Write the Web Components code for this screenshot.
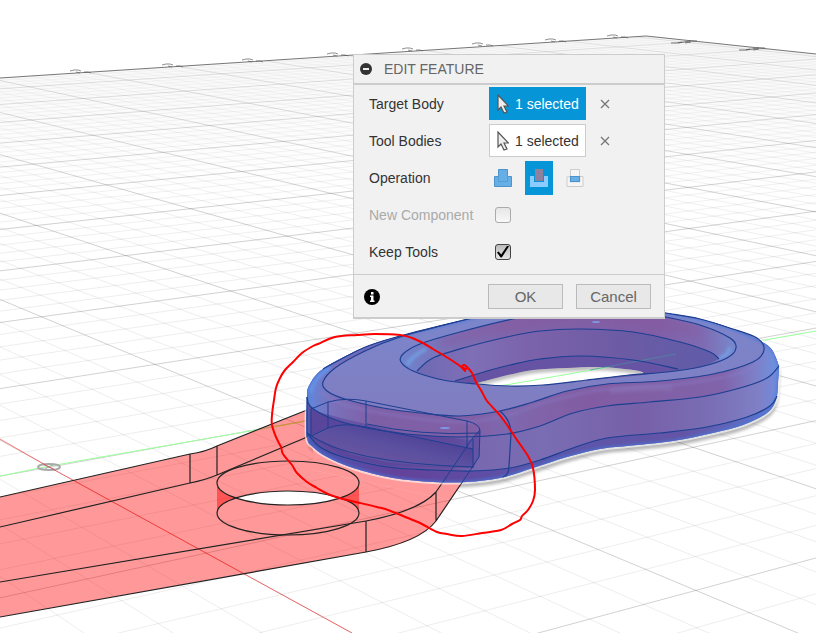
<!DOCTYPE html>
<html lang="en">
<head>
<meta charset="utf-8">
<title>Edit Feature</title>
<style>
  html, body { margin: 0; height: 100%; background: #fff; }
  body { font-family: "Liberation Sans", Arial, sans-serif; overflow: hidden; }
</style>
</head>
<body>
<cad-workspace>
  <model-canvas></model-canvas>
  <edit-feature-dialog slot="dialog"></edit-feature-dialog>
</cad-workspace>

<script>
/* Workspace: the canvas fills the window, the dialog floats over it. */
customElements.define('cad-workspace', class extends HTMLElement {
  constructor() {
    super();
    this.attachShadow({ mode: 'open' }).innerHTML = `
      <style>
        :host { display: block; position: relative; height: 100vh; overflow: hidden; }
        ::slotted([slot=dialog]) { position: absolute; left: 353px; top: 54px; }
      </style>
      <slot></slot><slot name="dialog"></slot>`;
  }
});

/* ---------- geometry helpers ---------- */

/* Plane-to-screen perspective, fitted to known grid crossings [a, b, x, y]. */
function fitPerspective(points) {
  const m = Array.from({ length: 8 }, () => Array(9).fill(0));
  for (const [a, b, x, y] of points)
    for (const r of [[a, b, 1, 0, 0, 0, -a * x, -b * x, x], [0, 0, 0, a, b, 1, -a * y, -b * y, y]])
      for (let i = 0; i < 8; i++) for (let j = 0; j < 9; j++) m[i][j] += r[i] * r[j];
  for (let i = 0; i < 8; i++) {
    let p = i;
    for (let k = i; k < 8; k++) if (Math.abs(m[k][i]) > Math.abs(m[p][i])) p = k;
    [m[i], m[p]] = [m[p], m[i]];
    for (let k = 0; k < 8; k++) if (k !== i) {
      const f = m[k][i] / m[i][i];
      for (let j = i; j < 9; j++) m[k][j] -= f * m[i][j];
    }
  }
  const h = m.map((r, i) => r[8] / r[i]);
  return (a, b) => {
    const w = h[6] * a + h[7] * b + 1;
    return w < 0.02 ? null : [(h[0] * a + h[1] * b + h[2]) / w, (h[3] * a + h[4] * b + h[5]) / w];
  };
}

/* Smooth curve through the points (Catmull-Rom to Bezier). */
function curve(pts, first = 'M') {
  const f = n => n.toFixed(1);
  let d = `${first}${pts[0]}`;
  for (let i = 0; i < pts.length - 1; i++) {
    const p0 = pts[i - 1] || pts[i], p1 = pts[i], p2 = pts[i + 1], p3 = pts[i + 2] || p2;
    d += `C${f(p1[0] + (p2[0] - p0[0]) / 6)} ${f(p1[1] + (p2[1] - p0[1]) / 6)} ${f(p2[0] - (p3[0] - p1[0]) / 6)} ${f(p2[1] - (p3[1] - p1[1]) / 6)} ${p2[0]} ${p2[1]}`;
  }
  return d;
}
const back = a => [...a].reverse();

/* ---------- ground grid ---------- */
function gridMarkup() {
  const at = fitPerspective([
    [0,1,181.7,91.3],[0,2,251.7,103.3],[0,3,321,116.7],[1,1,81.7,98.7],[1,2,144.3,111.3],[1,3,208.3,125.7],
    [1,4,282.7,141.3],[2,3,93.3,135.7],[2,4,164,152.3],[2,5,242.3,171.7],[2,6,328.3,193],[3,4,33.3,163.7],
    [3,5,107.3,184.7],[3,6,189.5,208.5],[3,7,287.3,236],[4,6,38.3,225.3],[4,7,126,255.3],[4,8,230,290.7],
    [5,8,41.7,316.7],[5,9,156,364.3],[6,10,49.3,466.7],[5,12,695,592],[5,11,466.7,495],[4,11,696.7,449],
    [0,7,687,187.7],[-2,5,687,126.7],[-1,6,687,154.3]
  ]);
  let minor = '', major = '';
  const add = (p, q, isMajor) => {
    if (!p || !q) return;
    const s = `M${p[0].toFixed(1)} ${p[1].toFixed(1)}L${q[0].toFixed(1)} ${q[1].toFixed(1)}`;
    if (isMajor) major += s; else minor += s;
  };
  for (let i = -50; i <= 50; i++) {
    const a = i / 5;
    for (let b = -1; b < 15; b++) add(at(a, b), at(a, b + 1), i % 5 === 0);
  }
  for (let i = -3; i <= 75; i++) {
    const b = i / 5;
    for (let a = -10; a < 10; a++) add(at(a, b), at(a + 1, b), i % 5 === 0);
  }
  return `<g clip-path="url(#floor)" fill="none">
    <path d="${minor}" stroke="url(#minorInk)"/>
    <path d="${major}" stroke="url(#majorInk)"/>
  </g>
  <path d="M0 78L646 36L816 54" fill="none" stroke="#555" stroke-opacity=".8"/>`;
}

/* ---------- link body curves ---------- */
const rimTop = [[307,397],[309,386],[323,369],[363,348],[400,336],[460,321],[515,309],[570,304],[620,306],[666,313],[700,319],[733,329],[760,341],[772,350],[779,366]];
const rimLow = [[779,366],[778,383],[776,400],[767,413],[743,425],[713,433],[673,441],[627,446],[600,449],[567,457],[533,468],[500,478],[467,482],[433,482],[393,478],[353,468],[327,457],[313,447],[307,437],[307,397]];
const faceOuter = [[460,321],[400,337],[365,351],[335,368],[323,382],[327,391],[345,399],[383,408],[420,413],[460,416],[500,411],[533,402],[567,391],[607,384],[660,381],[713,374],[753,362],[764,350],[757,338],[733,329]];
const sideTop = [[307,397],[311,407],[333,419],[367,428],[407,434],[460,437],[507,434],[540,426],[573,413],[607,406],[650,402],[700,397],[740,388],[767,378],[779,366]];
const sideLow = [[307,433],[320,447],[343,457],[387,467],[433,470],[473,471],[510,468],[540,460],[573,448],[607,438],[660,433],[707,427],[747,417],[770,406],[777,396]];
const ringTop = [[666,317],[620,311],[570,310],[513,319],[460,332],[420,344],[403,354],[401,362],[413,371],[443,380],[477,384],[510,386],[543,385],[587,380],[630,375],[667,372],[700,367],[727,358],[736,348],[730,338],[700,325],[666,317]];
const wallTop = [[417,371],[433,358],[467,347],[507,337],[540,331],[580,329],[633,332],[680,342],[710,352],[719,359]];
const wallLow = [[455,381],[487,371],[510,365],[540,359],[580,356],[633,360],[678,369]];
const ringFront = [[417,372],[443,380],[477,384],[510,386],[543,385],[587,380],[630,375],[667,372],[700,367],[719,359]];
const hole = [[474,384],[500,377],[533,370],[567,368],[600,367],[633,370],[643,373],[627,375],[587,380],[543,385],[510,386],[474,384]];

const pen = [[615,182],[600,168],[565,145],[520,118],[490,98],[455,83],[420,74],[345,71],[290,74],[225,82],[175,103],[160,108],[125,130],[100,155],[75,180],[60,205],[47,235],[42,270],[35,315],[37,345],[47,380],[62,410],[70,432],[95,465],[110,488],[140,517],[170,535],[205,552],[250,567],[300,578],[350,592],[385,601],[430,617],[480,640],[530,665],[560,673],[605,677],[665,670],[723,660],[755,642],[780,630],[785,618],[805,600],[820,572],[825,540],[818,475],[803,438],[765,380],[735,335],[712,305],[680,272],[665,247],[648,215],[635,190],[622,170],[612,166],[607,170],[618,178]]
  .map(([x, y]) => [Math.round(260 + x / 3), Math.round(310 + y / 3)]);

/* Tiny ruler figures lying flat along the far edges of the grid. */
const rulerLeft = [[78,71],[170,65],[250,60],[335,54],[410,49],[480,44],[553,40],[615,36]]
  .map(([x, y]) => `M${x - 8} ${y}l4 -1h4l3 1M${x - 2} ${y + 1}l4 1M${x + 6} ${y + 1}l4 0l3 1`).join('');
const rulerRight = [[684,42],[752,49]]
  .map(([x, y]) => `M${x - 13} ${y + 1}l6 0l5 -1M${x - 6} ${y + 1}l12 -2M${x + 1} ${y + 1}l6 -1M${x + 5} ${y - 1}l8 0`).join('');

customElements.define('model-canvas', class extends HTMLElement {
  constructor() {
    super();
    const body = curve(rimTop) + curve(rimLow, 'L') + 'Z';
    this.attachShadow({ mode: 'open' }).innerHTML = `
    <style>
      :host { display: block; height: 100%; }
      svg { display: block; width: 100%; height: 100%; }
    </style>
    <svg viewBox="0 0 816 633" preserveAspectRatio="xMinYMin slice" role="img" aria-label="3D model view">
      <defs>
        <clipPath id="floor"><path d="M0 78L646 36L816 54V633H0Z"/></clipPath>
        <clipPath id="solid"><path d="${body}"/></clipPath>
        <clipPath id="fillet"><path d="${curve(rimTop)}${curve(back(sideTop), 'L')}Z"/></clipPath>
        <clipPath id="opening"><path d="${curve(hole)}Z"/></clipPath>
        <clipPath id="ring"><path d="${curve(ringTop)}Z"/></clipPath>
        <filter id="b1" x="-20%" y="-20%" width="140%" height="140%"><feGaussianBlur stdDeviation="1.5"/></filter>
        <filter id="b4" x="-50%" y="-50%" width="200%" height="200%"><feGaussianBlur stdDeviation="4"/></filter>
        <linearGradient id="minorInk" x1="0" y1="40" x2="0" y2="260" gradientUnits="userSpaceOnUse">
          <stop offset="0" stop-color="#000" stop-opacity=".02"/><stop offset=".3" stop-color="#000" stop-opacity=".04"/><stop offset="1" stop-color="#000" stop-opacity=".07"/></linearGradient>
        <linearGradient id="majorInk" x1="0" y1="40" x2="0" y2="200" gradientUnits="userSpaceOnUse">
          <stop offset="0" stop-color="#000" stop-opacity=".09"/><stop offset="1" stop-color="#000" stop-opacity=".18"/></linearGradient>
        <linearGradient id="haze" x1="0" y1="36" x2="0" y2="200" gradientUnits="userSpaceOnUse">
          <stop offset="0" stop-color="#000" stop-opacity=".03"/><stop offset="1" stop-color="#000" stop-opacity="0"/></linearGradient>
        <linearGradient id="side" x1="307" x2="779" y1="0" y2="0" gradientUnits="userSpaceOnUse">
          <stop offset="0" stop-color="#5c4a9c"/><stop offset=".3" stop-color="#68509f"/><stop offset=".36" stop-color="#7868b0"/>
          <stop offset=".5" stop-color="#7a6db3"/><stop offset=".7" stop-color="#7760a8"/>
          <stop offset=".85" stop-color="#796db4"/><stop offset=".96" stop-color="#7f80c6"/><stop offset="1" stop-color="#6f8ce0"/></linearGradient>
        <linearGradient id="round" x1="307" x2="779" y1="0" y2="0" gradientUnits="userSpaceOnUse">
          <stop offset="0" stop-color="#5f88dc"/><stop offset=".05" stop-color="#7a72bb"/><stop offset=".14" stop-color="#7e5fa6"/>
          <stop offset=".35" stop-color="#805fa5"/><stop offset=".42" stop-color="#7f68ae"/><stop offset=".6" stop-color="#825ca2"/>
          <stop offset=".88" stop-color="#8063aa"/><stop offset=".95" stop-color="#7d80c8"/><stop offset="1" stop-color="#6d93e2"/></linearGradient>
        <linearGradient id="base" x1="307" x2="779" y1="0" y2="0" gradientUnits="userSpaceOnUse">
          <stop offset="0" stop-color="#4c55b0"/><stop offset=".2" stop-color="#64429a"/><stop offset=".5" stop-color="#5a56ab"/>
          <stop offset=".8" stop-color="#6454a6"/><stop offset="1" stop-color="#5b79d0"/></linearGradient>
        <linearGradient id="wall" x1="410" x2="720" y1="0" y2="0" gradientUnits="userSpaceOnUse">
          <stop offset="0" stop-color="#6c69b3"/><stop offset=".2" stop-color="#7e6fb6"/><stop offset=".4" stop-color="#7b62aa"/>
          <stop offset=".7" stop-color="#6b5ba4"/><stop offset="1" stop-color="#5f5ca9"/></linearGradient>
        <linearGradient id="ringFill" x1="401" x2="736" y1="0" y2="0" gradientUnits="userSpaceOnUse">
          <stop offset="0" stop-color="#6e84cc"/><stop offset=".12" stop-color="#7a72b8"/><stop offset=".35" stop-color="#8062a8"/>
          <stop offset=".75" stop-color="#815ea5"/><stop offset=".9" stop-color="#7e6bb2"/><stop offset="1" stop-color="#7888cd"/></linearGradient>
        <linearGradient id="top" x1="0" y1="320" x2="0" y2="415" gradientUnits="userSpaceOnUse">
          <stop offset="0" stop-color="#7c86cb"/><stop offset="1" stop-color="#807cc0"/></linearGradient>
        <linearGradient id="pocket" x1="395" x2="385" y1="428" y2="468" gradientUnits="userSpaceOnUse">
          <stop offset="0" stop-color="#4f4297"/><stop offset=".45" stop-color="#5b50a0"/><stop offset="1" stop-color="#6b559f"/></linearGradient>
      </defs>

      <rect width="816" height="633" fill="url(#haze)" clip-path="url(#floor)"/>
      ${gridMarkup()}
      <g fill="none" stroke="#555"><path d="${rulerLeft}" stroke-opacity=".65"/><path d="${rulerRight}" stroke-opacity=".8"/></g>

      <!-- origin and axes -->
      <path d="M0 476L50 466L273 427L816 331" fill="none" stroke="#9f9"/>
      <g fill="none" stroke="#aaa" stroke-width="2"><ellipse cx="49" cy="467" rx="11" ry="3"/><path d="M44 465l10 4M54 464l-9 5" stroke-width="1"/></g>

      <!-- shadow under the link -->
      <path d="${body}" fill="#000" fill-opacity=".28" transform="translate(1 5)" filter="url(#b1)"/>

      <!-- highlighted arm -->
      <path fill="#fff" d="M236 498A71 22 0 0 0 340 498A71 22 0 0 0 236 498Z"/>
      <path fill="#f99" d="M313 440L480 440L461 485L450 500L313 470Z"/>
      <path fill="#f00" fill-opacity=".4" fill-rule="evenodd"
        d="M0 497L190 454Q205 452 217 446L307 410L313 408V440L313 470L450 500L461 484L436 521Q420 543 366 552L0 617Z
           M236 498A71 22 0 0 0 340 498A71 22 0 0 0 236 498Z"/>
      <g fill="#f00" fill-opacity=".45">
        <path d="M217 483A71 22 0 0 0 236 498A71 22 0 0 0 217 513Z"/>
        <path d="M359 483A71 22 0 0 1 340 498A71 22 0 0 1 359 513Z"/>
      </g>
      <path d="M273 427L310 420" stroke="#c90" stroke-opacity=".45"/>
      <path d="M0 439L49 467L352 633" fill="none" stroke="#f00" stroke-opacity=".5"/>
      <g fill="none" stroke="#222" stroke-width="1.2">
        <path d="M0 497L190 454Q205 452 217 446L312 408M0 527L190 483Q205 480 217 475L312 435M190 454V483M217 446V475"/>
        <path d="M0 582L366 521Q419 511 436 492L447 476M0 617L366 552Q420 542 436 521L463 481M366 521V552M436 492V521"/>
        <ellipse cx="288" cy="483" rx="71" ry="22"/><ellipse cx="288" cy="513" rx="71" ry="22"/>
      </g>

      <!-- link body -->
      <path d="${body}" fill="none" stroke="#fff" stroke-opacity=".6" stroke-width="4"/>
      <path d="${body}" fill="url(#base)"/>
      <path d="${curve(rimTop)}L777 396${curve(back(sideLow), 'L')}Z" fill="url(#side)"/>
      <path d="${curve(rimTop)}${curve(back(sideTop), 'L')}Z" fill="url(#round)"/>
      <path d="M311 410L345 419L407 434L472 440L480 430V455L473 468L387 466L343 456L311 436Z" fill="#55439a" fill-opacity=".55"/>
      <path d="M311 435L328 428L343 424L366 427L400 435L473 449V468L430 466L387 462L350 454Z" fill="url(#pocket)"/>
      <path d="${curve(faceOuter)}L733 329${curve(back(rimTop.slice(5, 12)), 'L')}Z" fill="url(#top)"/>
      <g clip-path="url(#fillet)" fill="none" filter="url(#b1)">
        <path d="${curve([[320,392],[345,405],[400,416],[460,422],[505,416],[550,401],[607,389],[680,384],[740,373],[768,355]])}" stroke="#8b80cc" stroke-width="2" stroke-opacity=".5"/>
        <path d="M610 391Q645 387 672 388" stroke="#938bcd" stroke-width="6" stroke-opacity=".25"/>
        <path d="M310 393Q311 378 330 367" stroke="#6794e8" stroke-width="5"/>
      </g>
      <path d="${curve(ringTop)}Z" fill="url(#ringFill)"/>
      <g clip-path="url(#ring)">
        <path d="${curve([[440,343],[500,327],[570,316],[640,320],[700,333]])}" fill="none" stroke="#8b5799" stroke-opacity=".6" stroke-width="6" filter="url(#b4)"/>
        <path d="M407 365Q412 356 426 349M718 359Q731 354 729 347" fill="none" stroke="#72a5e8" stroke-opacity=".75" stroke-width="4" filter="url(#b1)"/>
      </g>
      <path d="${curve(wallTop)}${curve(back(ringFront), 'L')}Z" fill="url(#wall)"/>
      <path d="${curve(wallLow)}L643 375L543 385L474 384Z" fill="#6653a3"/>
      <g clip-path="url(#opening)">
        <rect x="460" y="360" width="200" height="30" fill="#fff"/>
        <path d="${curve(hole.slice(0, 7))}" fill="none" stroke="#000" stroke-opacity=".25" stroke-width="7" filter="url(#b1)"/>
        <path d="M500 386L816 331" stroke="#9f9"/>
      </g>
      <path d="M590 370L676 354" stroke="#4a8f9f" stroke-opacity=".7"/>
      <path d="${body}" fill="none" stroke="#4a78d8" stroke-opacity=".7" stroke-width="3" clip-path="url(#solid)" filter="url(#b1)"/>
      <path d="${body}" fill="none" stroke="#456fd0" stroke-opacity=".55" clip-path="url(#solid)"/>

      <g fill="none" stroke="#1d3f91" stroke-width="1.2">
        <path d="${curve(rimTop.slice(2, 12))}"/>
        <path d="${curve(faceOuter)}"/><path d="${curve(sideTop)}"/><path d="${curve(sideLow)}"/>
        <path d="${curve(ringTop)}"/><path d="${curve(wallTop)}"/><path d="${curve(wallLow)}"/>
        <path d="M307 397V437M500 411Q511 420 511 434L509 466Q509 475 503 477"/>
        <path stroke-width="1" d="M311 409L328 402Q347 397 366 401L467 421Q480 424 480 431L479 457L461 484
          M311 436L328 428Q343 422 366 427L473 449M311 409V436M328 402V428M366 401V427M467 421V448M473 439V468
          M480 430L472 439L443 482M307 433Q345 463 473 467M367 424Q420 436 480 433"/>
      </g>
      <ellipse cx="445" cy="428" rx="5" ry="1" fill="#7f97e6"/><ellipse cx="596" cy="322" rx="4" ry="1" fill="#7f97e6"/>

      <!-- freehand markup -->
      <path d="${curve(pen)}" fill="none" stroke="#f00" stroke-width="2" stroke-linecap="round" stroke-linejoin="round"/>
    </svg>`;
  }
});

/* One labelled line of the dialog. */
customElements.define('feature-row', class extends HTMLElement {
  constructor() {
    super();
    this.attachShadow({ mode: 'open' }).innerHTML = `
      <style>
        :host { display: grid; grid-template-columns: 120px 1fr; align-items: center; height: 37px; }
        .value { display: flex; align-items: center; }
      </style>
      <slot name="label"></slot><div class="value"><slot></slot></div>`;
  }
});

/* Small drawings used by the dialog's controls. */
const ICONS = {
  cursor: [12, 20, '<path d="M1 1V16L4 13L7 19L10 18L7 12H11.500Z" fill="#eee" stroke="#555" stroke-width="1.2"/>'],
  clear: [10, 10, '<path d="M1 1L9 9M9 1L1 9" fill="none" stroke="#777" stroke-width="1.3"/>'],
  join: [18, 18, '<path d="M4.500 .5H13.500V7.500H17.500V17.500H.5V7.500H4.500Z" fill="#65aee6" stroke="#4e93c9"/><path d="M4.500 7.500V12.500H13.500V7.500" fill="none" stroke="#559cd3"/>'],
  cut: [18, 18, '<path d="M0 7H4V13H14V7H18V18H0Z" fill="#8accff"/><rect x="5" y="0" width="8" height="12" fill="#8d829d"/>'],
  intersect: [18, 18, '<path d="M4.500 .5H13.500V7.500H17V17.500H1V7.500H4.500Z" fill="#f5f5f5" stroke="#ccc"/><path d="M1 8H4V13H14V8" fill="none" stroke="#ddd"/><rect x="4.500" y="7.500" width="9" height="5" fill="#65aee6" stroke="#4a93cc"/>'],
  collapse: [12, 12, '<circle cx="6" cy="6" r="6" fill="#333"/><rect x="3" y="5" width="6" height="2" fill="#eee"/>'],
  info: [16, 16, '<circle cx="8" cy="8" r="8" fill="#000"/><path d="M7 3h2.500v2.500H7zM6 6.500h3.500v5h1V13H6v-1.500h1V8H6z" fill="#fff"/>']
};
customElements.define('ui-icon', class extends HTMLElement {
  connectedCallback() {
    if (this.shadowRoot) return;
    const [w, h, art] = ICONS[this.getAttribute('name')];
    this.attachShadow({ mode: 'open' }).innerHTML = `
      <style>:host { display: block; flex: none; } svg { display: block; }</style>
      <svg width="${w}" height="${h}" viewBox="0 0 ${w} ${h}" aria-hidden="true">${art}</svg>`;
  }
});

customElements.define('edit-feature-dialog', class extends HTMLElement {
  constructor() {
    super();
    this.attachShadow({ mode: 'open' }).innerHTML = `
    <style>
      :host { display: block; box-sizing: border-box; width: 312px; max-width: 100%; background: #f1f1f1; color: #333;
        border: 1px solid #ccc; border-bottom-width: 2px; font-size: 14px; line-height: 16px; }
      button { font: inherit; color: inherit; margin: 0; cursor: pointer; }
      header { display: flex; align-items: center; gap: 12px; height: 28px; padding-left: 6px; border-bottom: 2px solid #ccc; }
      h1 { margin: 0; font-size: 14px; font-weight: 400; color: #666; }
      .plain { display: flex; border: 0; padding: 0; background: none; }
      .rows { padding: 0 15px 4px; }
      .pick { display: flex; align-items: center; gap: 6px; box-sizing: border-box; height: 33px; padding: 0 6px 0 7px;
        border: 1px solid #ccc; background: #fff; white-space: nowrap; }
      .pick.on { background: #0696d7; border-color: #0696d7; color: #fff; }
      .clear { padding: 4px; margin-left: 10px; }
      .ops { display: flex; align-items: center; gap: 8px; }
      .op { position: relative; display: grid; place-items: center; width: 28px; height: 34px; }
      .op:has(:checked) { background: #0696d7; }
      .op input { appearance: none; position: absolute; inset: 0; margin: 0; cursor: pointer; }
      input[type=checkbox] { appearance: none; display: grid; place-items: center; box-sizing: border-box; width: 16px; height: 16px;
        margin: 0 0 0 6px; border: 1px solid #444; border-radius: 3px; background: linear-gradient(#bbb, #e6e6e6); }
      input[type=checkbox]:disabled { border-color: #aaa; background: linear-gradient(#e6e6e6, #f8f8f8); }
      input[type=checkbox]:checked::before { content: ""; width: 12px; height: 12px; background: #000;
        clip-path: polygon(0 58%, 14% 50%, 35% 76%, 86% 0, 100% 6%, 40% 100%, 30% 100%); }
      .off { color: #aaa; }
      footer { display: flex; align-items: center; justify-content: space-between; height: 43px; padding: 1px 13px 0 10px; border-top: 1px solid #ccc; box-sizing: border-box; }
      .actions { display: flex; gap: 13px; }
      .actions button { box-sizing: border-box; width: 75px; height: 25px; padding: 0; border: 1px solid #bbb; background: #e8e8e8;
        color: #666; font-size: 15px; line-height: 17px; }
    </style>
    <header>
      <button class="plain" aria-label="Collapse"><ui-icon name="collapse"></ui-icon></button>
      <h1>EDIT FEATURE</h1>
    </header>
    <div class="rows">
      <feature-row>
        <label slot="label" for="target">Target Body</label>
        <button class="pick on" id="target"><ui-icon name="cursor"></ui-icon>1 selected</button>
        <button class="plain clear" aria-label="Clear target body"><ui-icon name="clear"></ui-icon></button>
      </feature-row>
      <feature-row>
        <label slot="label" for="tools">Tool Bodies</label>
        <button class="pick" id="tools"><ui-icon name="cursor"></ui-icon>1 selected</button>
        <button class="plain clear" aria-label="Clear tool bodies"><ui-icon name="clear"></ui-icon></button>
      </feature-row>
      <feature-row>
        <span slot="label" id="op-label">Operation</span>
        <div class="ops" role="radiogroup" aria-labelledby="op-label">
          <label class="op"><input type="radio" name="op" aria-label="Join"><ui-icon name="join"></ui-icon></label>
          <label class="op"><input type="radio" name="op" aria-label="Cut" checked><ui-icon name="cut"></ui-icon></label>
          <label class="op"><input type="radio" name="op" aria-label="Intersect"><ui-icon name="intersect"></ui-icon></label>
        </div>
      </feature-row>
      <feature-row>
        <label slot="label" class="off" for="new-component">New Component</label>
        <input type="checkbox" id="new-component" disabled>
      </feature-row>
      <feature-row>
        <label slot="label" for="keep-tools">Keep Tools</label>
        <input type="checkbox" id="keep-tools" checked>
      </feature-row>
    </div>
    <footer>
      <button class="plain" aria-label="Information"><ui-icon name="info"></ui-icon></button>
      <div class="actions"><button>OK</button><button>Cancel</button></div>
    </footer>`;
  }
});
</script>
</body>
</html>
